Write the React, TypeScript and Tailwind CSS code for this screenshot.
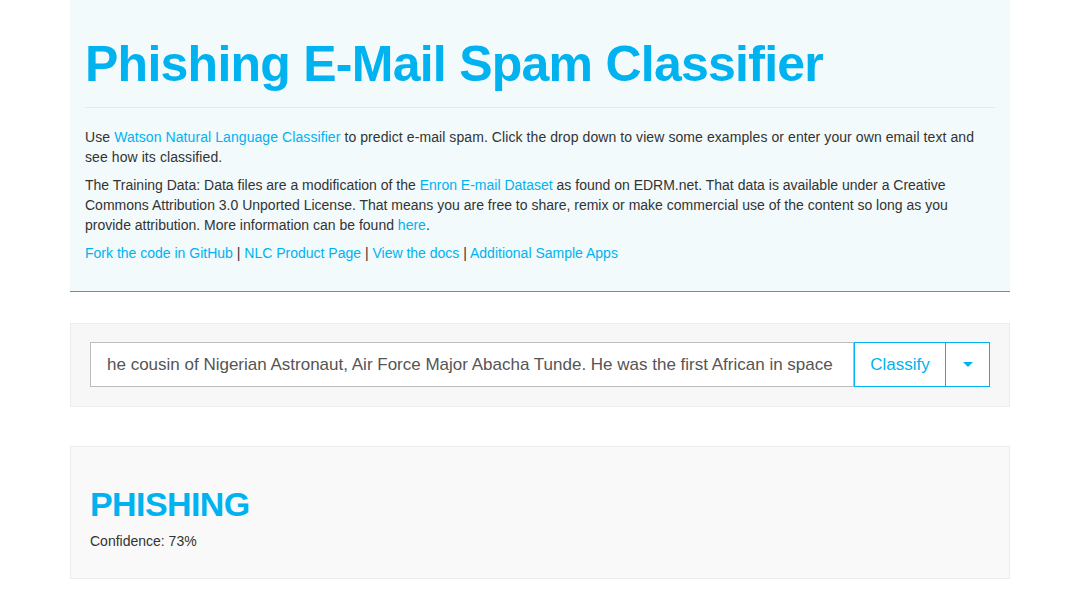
import { useState } from "react";

const blue = "text-[#00b2ef]";

export default function App() {
  const [text, setText] = useState(
    "he cousin of Nigerian Astronaut, Air Force Major Abacha Tunde. He was the first African in space"
  );

  return (
    <div className="min-h-[607px] bg-white font-['Liberation_Sans',Arial,sans-serif] text-[#333]">
      <div className="ml-[70px] w-[940px]">
        {/* Header / intro */}
        <div className="bg-[#f2fafc] border-b border-[#2ea3d8] px-[15px] pt-[34px] pb-[28px]">
          <h1 className={`text-[50px] leading-[60px] font-bold tracking-[-0.75px] ${blue}`}>
            Phishing E-Mail Spam Classifier
          </h1>
          <hr className="mt-[13px] mb-[19px] border-t border-[#e4ecef]" />
          <p className="text-[14px] leading-[20px] tracking-[0.08px]">
            Use{" "}
            <a href="#" className={blue}>
              Watson Natural Language Classifier
            </a>{" "}
            to predict e-mail spam. Click the drop down to view some examples or enter your own email text and see
            how its classified.
          </p>
          <p className="mt-[8px] text-[14px] leading-[20px]">
            The Training Data: Data files are a modification of the{" "}
            <a href="#" className={blue}>
              Enron E-mail Dataset
            </a>{" "}
            as found on EDRM.net. That data is available under a Creative Commons Attribution 3.0 Unported License.
            That means you are free to share, remix or make commercial use of the content so long as you provide
            attribution. More information can be found{" "}
            <a href="#" className={blue}>
              here
            </a>
            .
          </p>
          <p className="mt-[8px] text-[14px] leading-[20px]">
            <a href="#" className={blue}>Fork the code in GitHub</a> |{" "}
            <a href="#" className={blue}>NLC Product Page</a> |{" "}
            <a href="#" className={blue}>View the docs</a> |{" "}
            <a href="#" className={blue}>Additional Sample Apps</a>
          </p>
        </div>

        {/* Input */}
        <div className="mt-[31px] bg-[#f7f7f7] border border-[#ececec] px-[19px] pt-[18px] pb-[19px]">
          <div className="flex h-[45px]">
            <input
              value={text}
              onChange={(e) => setText(e.target.value)}
              className="flex-1 min-w-0 bg-white border border-[#bdbdbd] px-[16px] text-[17px] text-[#555] outline-none"
            />
            <button className={`w-[92px] bg-white border border-[#00b2ef] text-[17px] ${blue}`}>Classify</button>
            <button className="w-[44px] bg-white border border-l-0 border-[#00b2ef] flex items-center justify-center">
              <span className="w-0 h-0 border-l-[5px] border-r-[5px] border-t-[5px] border-l-transparent border-r-transparent border-t-[#00b2ef]" />
            </button>
          </div>
        </div>

        {/* Result */}
        <div className="mt-[39px] bg-[#f9f9f9] border border-[#ececec] px-[19px] pt-[37px] pb-[27px]">
          <h2 className={`text-[34px] leading-[40px] font-bold tracking-[-0.6px] ${blue}`}>PHISHING</h2>
          <p className="mt-[7px] text-[14px] leading-[20px] text-[#333]">Confidence: 73%</p>
        </div>
      </div>
    </div>
  );
}
